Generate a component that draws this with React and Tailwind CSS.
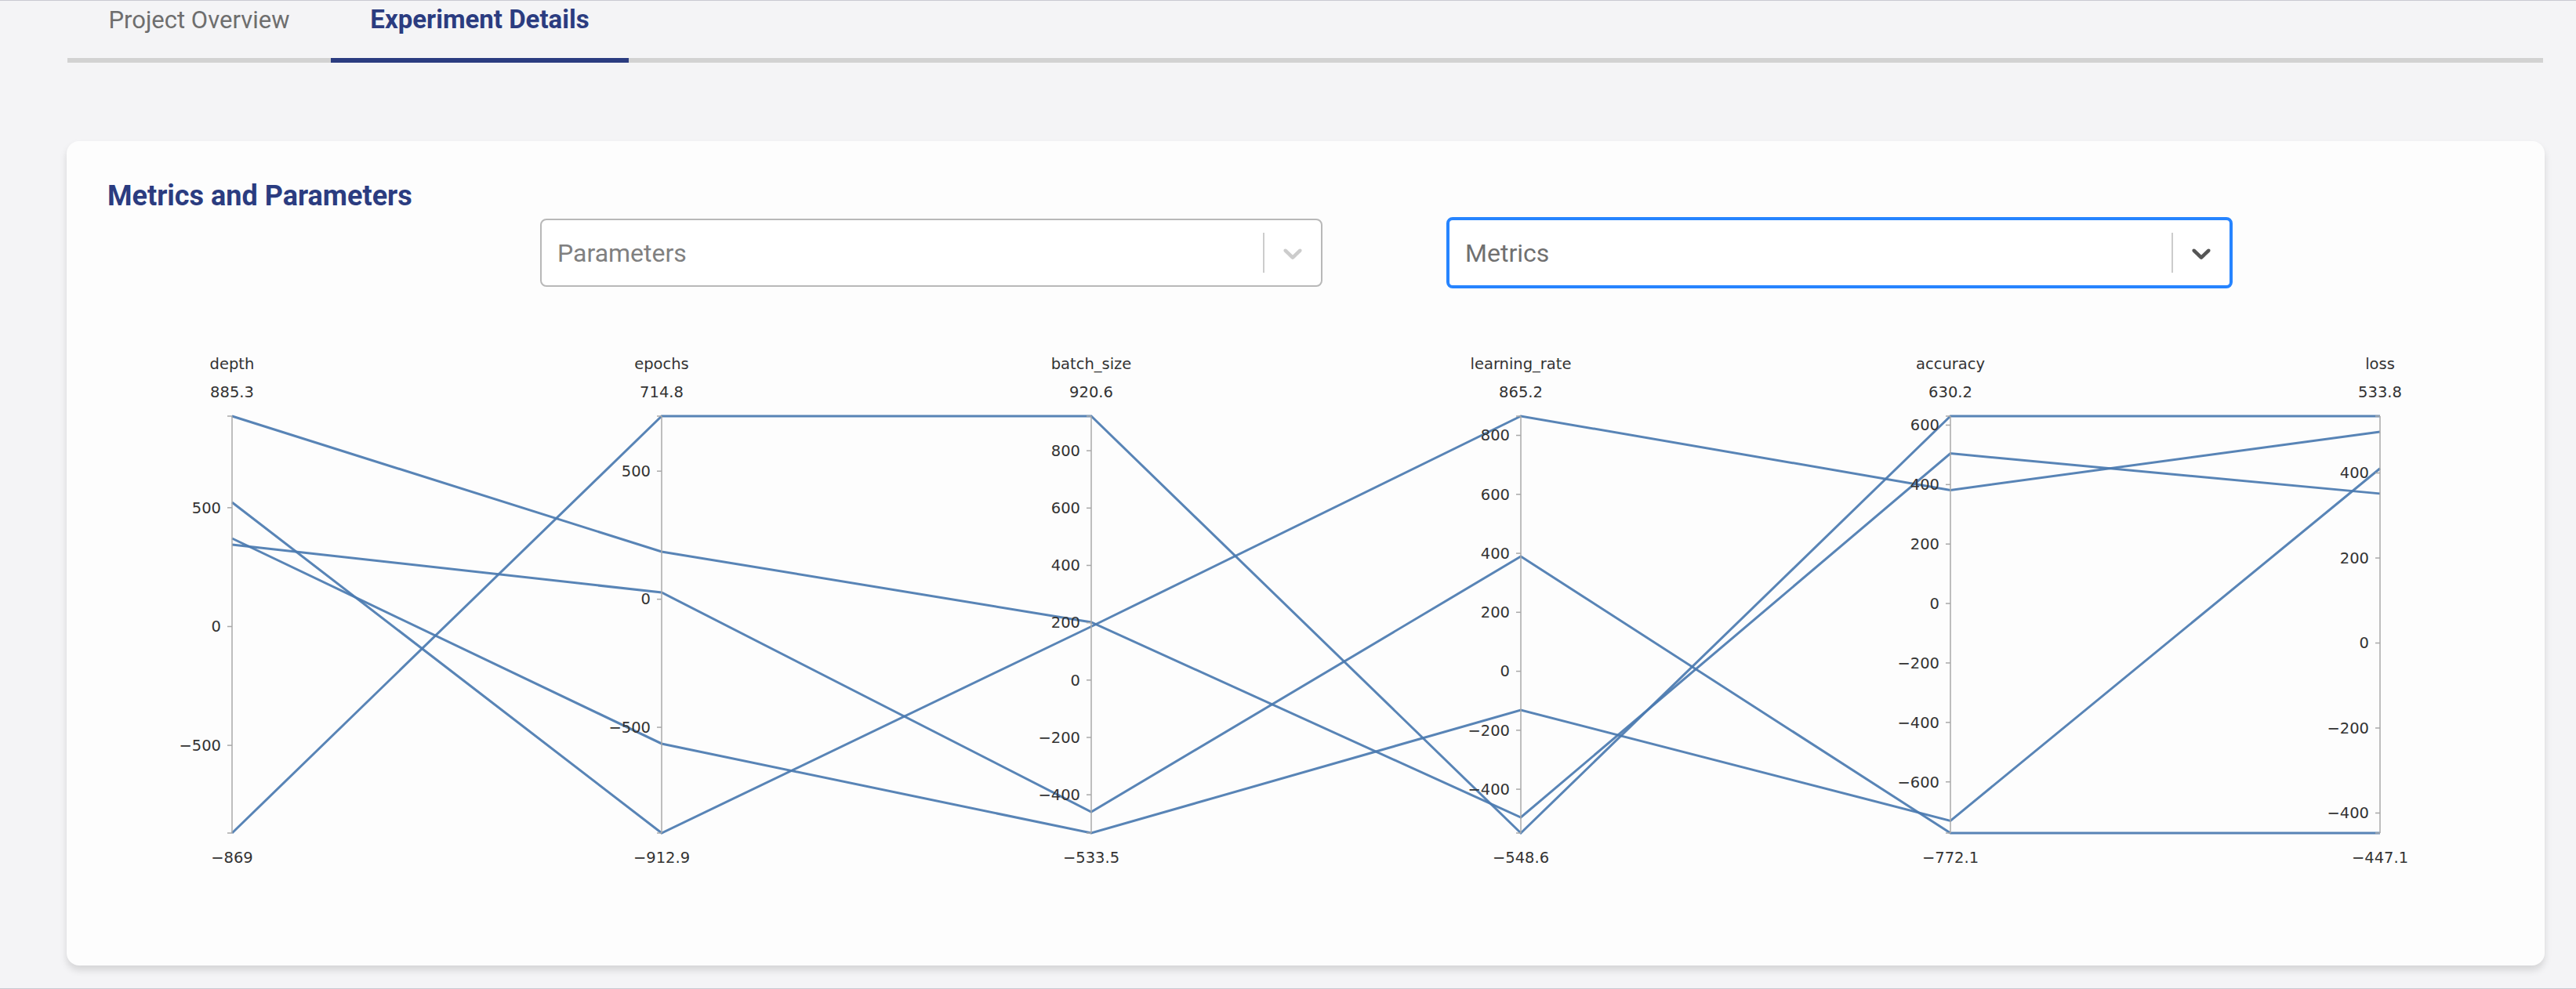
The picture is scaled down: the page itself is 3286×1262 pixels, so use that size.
import React from 'react';

const axes = [
  { name: 'depth', max: 885.3, min: -869, ticks: [500, 0, -500] },
  { name: 'epochs', max: 714.8, min: -912.9, ticks: [500, 0, -500] },
  { name: 'batch_size', max: 920.6, min: -533.5, ticks: [800, 600, 400, 200, 0, -200, -400] },
  { name: 'learning_rate', max: 865.2, min: -548.6, ticks: [800, 600, 400, 200, 0, -200, -400] },
  { name: 'accuracy', max: 630.2, min: -772.1, ticks: [600, 400, 200, 0, -200, -400, -600] },
  { name: 'loss', max: 533.8, min: -447.1, ticks: [400, 200, 0, -200, -400] },
];

const runs = [
  [885.3, 185.5, 201.8, -495.5, 504.7, 351.5],
  [522.6, -912.9, 186.7, 865.2, 381.4, 497.1],
  [370.9, -564, -533.5, -131.4, -730.8, 410.7],
  [344.5, 26.4, -459.7, 389.5, -772.1, -447.1],
  [-869, 714.8, 920.6, -548.6, 630.2, 533.8],
];

const X0 = 159;
const GAP = 548;
const TOP = 132;
const H = 532;

const fmt = (v) => (v < 0 ? '\u2212' + Math.abs(v) : String(v));
const yOf = (ax, v) => TOP + ((ax.max - v) / (ax.max - ax.min)) * H;

function ParCoords() {
  return (
    <svg width="3057" height="780" className="block" style={{ fontFamily: '"DejaVu Sans", Verdana, sans-serif' }}>
      {runs.map((r, i) => (
        <polyline
          key={i}
          points={r.map((v, j) => `${X0 + GAP * j},${yOf(axes[j], v)}`).join(' ')}
          fill="none"
          stroke="#4a7ab0"
          strokeWidth="3"
          strokeOpacity="0.92"
        />
      ))}
      {axes.map((ax, j) => {
        const x = X0 + GAP * j;
        return (
          <g key={ax.name}>
            <line x1={x} y1={TOP} x2={x} y2={TOP + H} stroke="#a8a8a8" strokeWidth="1.5" />
            <line x1={x - 6} y1={TOP} x2={x} y2={TOP} stroke="#a8a8a8" strokeWidth="1.5" />
            <line x1={x - 6} y1={TOP + H} x2={x} y2={TOP + H} stroke="#a8a8a8" strokeWidth="1.5" />
            {ax.ticks.map((t) => (
              <g key={t}>
                <line x1={x - 6} y1={yOf(ax, t)} x2={x} y2={yOf(ax, t)} stroke="#a8a8a8" strokeWidth="1.5" />
                <text x={x - 14} y={yOf(ax, t)} dy="0.35em" textAnchor="end" fontSize="19.5" fill="#333">
                  {fmt(t)}
                </text>
              </g>
            ))}
            <text x={x} y="72" textAnchor="middle" fontSize="19.5" fill="#333">{ax.name}</text>
            <text x={x} y="108" textAnchor="middle" fontSize="19.5" fill="#333">{fmt(ax.max)}</text>
            <text x={x} y="702" textAnchor="middle" fontSize="19.5" fill="#333">{fmt(ax.min)}</text>
          </g>
        );
      })}
    </svg>
  );
}

function Chevron({ color }) {
  return (
    <svg width="40" height="40" viewBox="0 0 20 20" fill={color}>
      <path d="M4.516 7.548c0.436-0.446 1.043-0.481 1.576 0l3.908 3.747 3.908-3.747c0.533-0.481 1.141-0.446 1.574 0 0.436 0.445 0.408 1.197 0 1.615-0.406 0.418-4.695 4.502-4.695 4.502-0.217 0.223-0.502 0.335-0.787 0.335s-0.57-0.112-0.789-0.335c0 0-4.287-4.084-4.695-4.502s-0.436-1.17 0-1.615z" />
    </svg>
  );
}

export default function App() {
  return (
    <div
      className="h-[1262px] overflow-hidden bg-[#f4f4f6] border-t border-b border-[#c9c9d1]"
      style={{ fontFamily: 'Roboto, "Liberation Sans", sans-serif' }}
    >
      <div className="ml-[86px] mr-[42px] flex border-b-[6px] border-[#d2d2d2]">
        <div className="w-[336px] text-center pt-[6px] pb-[30px] -mb-[6px] border-b-[6px] border-transparent text-[31px] leading-[37px] text-[#6e6e6e]">
          Project Overview
        </div>
        <div className="w-[380px] text-center pt-[5px] pb-[30px] -mb-[6px] border-b-[6px] border-[#2b3c80] text-[33px] leading-[38px] font-bold text-[#2b3c80]">
          Experiment Details
        </div>
      </div>

      <div className="mt-[100px] ml-[85px] mr-[40px] rounded-2xl bg-[#fdfdfd] px-[52px] pt-[49px] pb-[53px] shadow-[0_6px_10px_rgba(0,0,0,0.13)]">
        <h2 className="text-[36px] leading-[42px] font-bold text-[#2b3c80]">Metrics and Parameters</h2>

        <div className="mt-[6px] flex items-center h-[91px] pl-[552px] gap-[158px]">
          <div className="w-[998px] h-[87px] flex items-center rounded-lg border-2 border-[#b8b8b8] bg-white">
            <div className="flex-1 pl-[20px] text-[32px] text-[#808080]">Parameters</div>
            <div className="w-[2px] self-stretch my-[16px] bg-[#cccccc]" />
            <div className="px-[16px] flex items-center">
              <Chevron color="#cccccc" />
            </div>
          </div>
          <div className="w-[1003px] h-[91px] flex items-center rounded-lg border-4 border-[#2684ff] bg-white">
            <div className="flex-1 pl-[20px] text-[32px] text-[#707070]">Metrics</div>
            <div className="w-[2px] self-stretch my-[16px] bg-[#cccccc]" />
            <div className="px-[16px] flex items-center">
              <Chevron color="#555555" />
            </div>
          </div>
        </div>

        <div className="mt-[31px]">
          <ParCoords />
        </div>
      </div>
    </div>
  );
}
